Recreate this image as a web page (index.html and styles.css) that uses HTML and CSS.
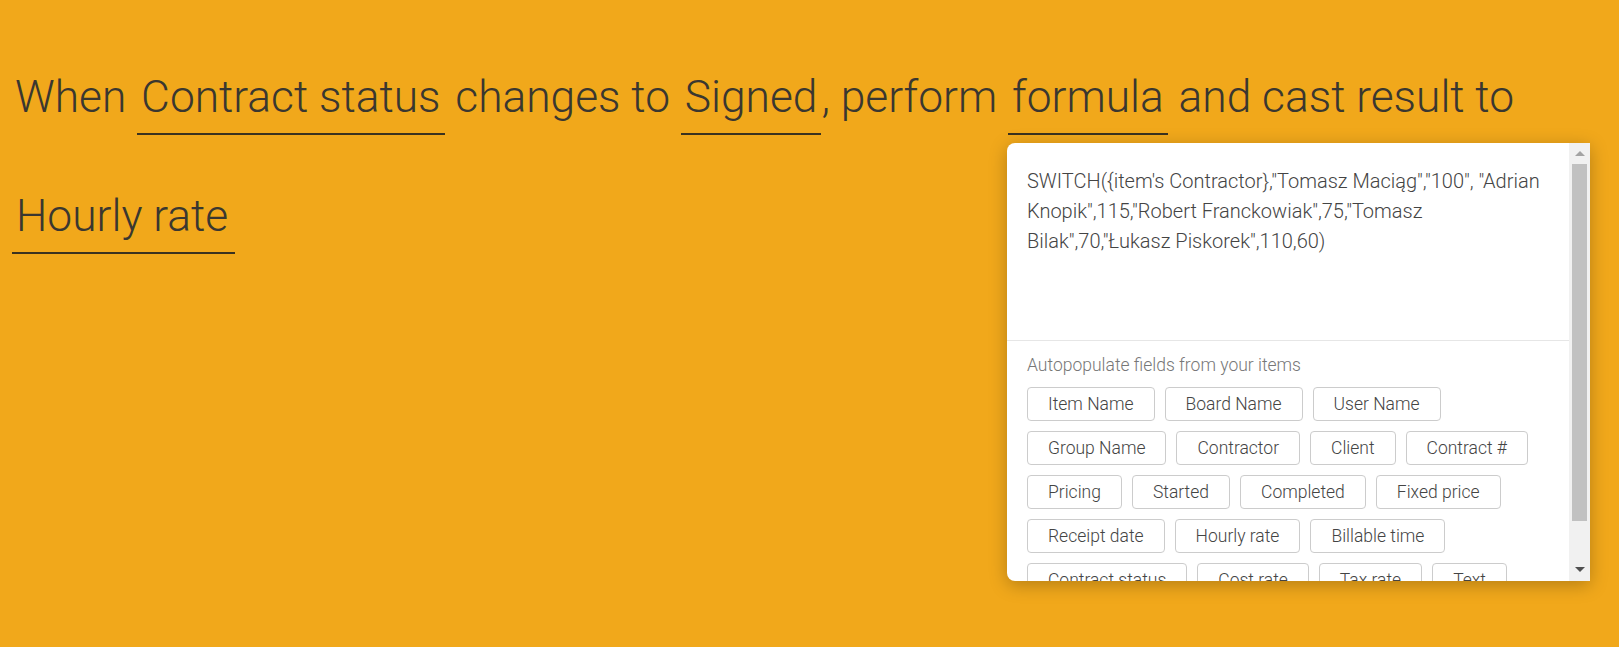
FILE: index.html
```html
<!DOCTYPE html>
<html lang="en">
<head>
  <meta charset="UTF-8">
  <title>Automation recipe</title>
  <link rel="stylesheet" href="styles.css">
</head>
<body>
  <div class="recipe">
    <p class="sentence">
      When <span class="field">Contract status</span> changes to <span class="field">Signed</span>, perform <span class="field">formula</span> and cast result to <span class="field">Hourly rate</span>
    </p>

    <!-- Редактор формулы -->
    <div class="formula-popup">
      <div class="popup-body">
        <div class="formula-text">SWITCH({item's Contractor},"Tomasz Maciąg","100", "Adrian Knopik",115,"Robert Franckowiak",75,"Tomasz Bilak",70,"Łukasz Piskorek",110,60)</div>
        <div class="autofill">
          <div class="autofill-title">Autopopulate fields from your items</div>
          <div class="chips">
            <span class="chip">Item Name</span>
            <span class="chip">Board Name</span>
            <span class="chip">User Name</span>
            <span class="chip">Group Name</span>
            <span class="chip">Contractor</span>
            <span class="chip">Client</span>
            <span class="chip">Contract #</span>
            <span class="chip">Pricing</span>
            <span class="chip">Started</span>
            <span class="chip">Completed</span>
            <span class="chip">Fixed price</span>
            <span class="chip">Receipt date</span>
            <span class="chip">Hourly rate</span>
            <span class="chip">Billable time</span>
            <span class="chip">Contract status</span>
            <span class="chip">Cost rate</span>
            <span class="chip">Tax rate</span>
            <span class="chip">Text</span>
          </div>
        </div>
      </div>
      <div class="scrollbar">
        <span class="arrow arrow-up"></span>
        <span class="thumb"></span>
        <span class="arrow arrow-down"></span>
      </div>
    </div>
  </div>
</body>
</html>
```

FILE: styles.css
```css
/* Общие стили */
body {
    margin: 0;
    background: #f1a81b;
    font-family: Roboto, 'Liberation Sans', sans-serif;
    font-weight: 300;
    color: #3a3730;
}

.recipe {
    position: relative;
    height: 647px;
}

.sentence {
    margin: 0;
    padding: 38px 12px 0 15px;
    font-size: 44.3px;
    line-height: 119px;
}

.field {
    display: inline-block;
    line-height: normal;
    padding: 0 4px 10px;
    border-bottom: 2px solid #3a3220;
}

.sentence .field:last-child {
    margin-left: -3px;
    padding-right: 7px;
}

/* Попап с формулой */
.formula-popup {
    position: absolute;
    left: 1007px;
    top: 143px;
    width: 583px;
    height: 438px;
    display: flex;
    background: #fff;
    border-radius: 8px 0 0 8px;
    box-shadow: 0 4px 18px rgba(0, 0, 0, 0.25);
    overflow: hidden;
}

.popup-body {
    flex: 1;
    overflow: hidden;
}

.formula-text {
    height: 198px;
    box-sizing: border-box;
    padding: 23px 20px 0;
    font-size: 20px;
    line-height: 30px;
    color: #444;
    border-bottom: 1px solid #e6e6e6;
}

.autofill {
    padding: 14px 20px 0;
}

.autofill-title {
    font-size: 17.5px;
    line-height: 20px;
    color: #777;
    margin-bottom: 12px;
}

.chips {
    display: flex;
    flex-wrap: wrap;
    gap: 10px 10px;
}

.chip {
    padding: 0 20px;
    border: 1px solid #ccc;
    border-radius: 4px;
    font-size: 17.5px;
    line-height: 32px;
    color: #444;
    white-space: nowrap;
}

/* Полоса прокрутки */
.scrollbar {
    width: 21px;
    background: #f1f1f1;
    display: flex;
    flex-direction: column;
    align-items: center;
}

.arrow {
    width: 0;
    height: 0;
    border-left: 5px solid transparent;
    border-right: 5px solid transparent;
}

.arrow-up {
    margin-top: 8px;
    border-bottom: 5px solid #a3a3a3;
}

.arrow-down {
    margin-top: auto;
    margin-bottom: 9px;
    border-top: 5px solid #505050;
}

.thumb {
    width: 15px;
    height: 357px;
    margin-top: 8px;
    background: #c1c1c1;
}
```
